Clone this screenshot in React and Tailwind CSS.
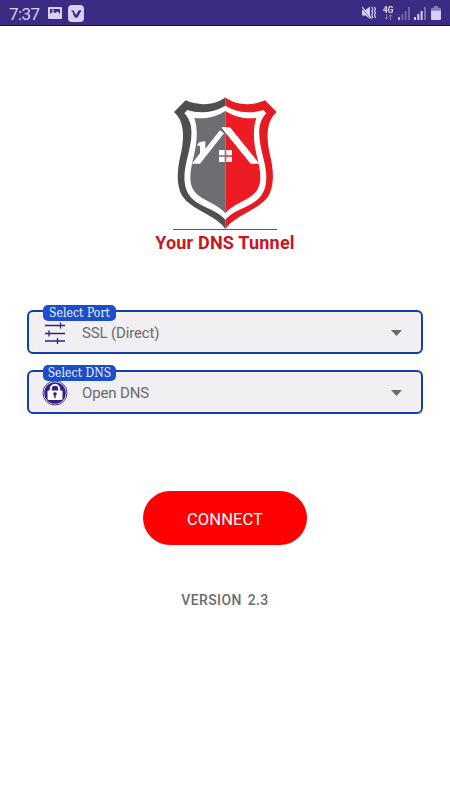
const serif = "font-['DejaVu_Serif_Condensed','DejaVu_Serif',serif]";

function StatusBar() {
  return (
    <header className="flex h-[26px] items-center border-b border-[#1d0a60] bg-[#3c2b82] pl-[9px] pr-[9px] text-[#d9d0f3]">
      <span className="w-[32px] whitespace-nowrap pt-[2px] text-[17px] leading-[24px] tracking-[-0.6px]">7:37</span>
      <svg className="ml-[7px] mt-[1px]" width="14" height="12" viewBox="0 0 14 12">
        <rect width="14" height="12" rx="1" fill="#d9d0f3" />
        <path d="M2 2h10v5L9.5 4.5 7 6 4.5 4.7 2 7Z" fill="#3c2b82" />
        <circle cx="5" cy="3.5" r="1" fill="#d9d0f3" />
        <path d="M2 8l3-2.5L7 7l3-2 2 3v1H2Z" fill="#d9d0f3" />
      </svg>
      <svg className="ml-[6px] mt-[1px]" width="16" height="17" viewBox="0 0 16 17">
        <rect width="16" height="17" rx="4" fill="#d9d0f3" />
        <path d="M3 5.5h2.2c.8 0 .9.5 1.3 1.7L8 10l2-3.6c.5-.9.8-1.1 1.6-1.1H13.5L10 11.8c-.7 1.3-3 1.3-3.8 0L4.5 7Z" fill="#3c2b82" />
      </svg>
      <div className="ml-auto mt-[1px] flex items-center">
        <svg width="14" height="16" viewBox="0 0 14 16" fill="none">
          <path d="M0 5h3.5L8 1.5v12.5L3.5 10.5H0Z" fill="#d9d0f3" />
          <path d="M0 3l9 11" stroke="#3c2b82" strokeWidth="1" />
          <path d="M0 1.8l9.5 11.7" stroke="#d9d0f3" strokeWidth="1.2" />
          <path d="M9.8 2l1 2-1 2 1 2-1 2 1 3M12.5 2l1 2-1 2 1 2-1 2 1 3" stroke="#d9d0f3" strokeWidth="1.2" />
        </svg>
        <div className="ml-[6px] flex w-[12px] flex-col items-center">
          <span className="text-[8.5px] font-bold leading-[8px]">4G</span>
          <svg width="9" height="6" viewBox="0 0 9 6" fill="none" stroke="#887abb">
            <path d="M2.5 0v5M.7 3.4l1.8 1.9 1.8-1.9M6.5 6V1M4.7 2.6L6.5.7l1.8 1.9" />
          </svg>
        </div>
        <svg className="ml-[4px]" width="12" height="13" viewBox="0 0 12 13">
          <path d="M0 10h2v3H0Z" fill="#c5bae5" />
          <path d="M3.3 7h2v6h-2ZM6.6 4h2v9h-2ZM10 0h2v13h-2Z" fill="#7061a9" />
        </svg>
        <svg className="ml-[4px]" width="12" height="13" viewBox="0 0 12 13">
          <path d="M0 10h2v3H0ZM3.3 7h2v6h-2ZM6.6 4h2v9h-2Z" fill="#d9d0f3" />
          <path d="M10 0h2v13h-2Z" fill="#7e6eb3" />
        </svg>
        <svg className="ml-[5px]" width="10" height="14" viewBox="0 0 10 14">
          <path d="M3 0h4v1.7h2Q10 1.7 10 3v2H0V3q0-1.3 1-1.3h2Z" fill="#8a7dbb" />
          <path d="M0 4.7h10V13q0 1-1 1H1q-1 0-1-1Z" fill="#d9d0f3" />
        </svg>
      </div>
    </header>
  );
}

function Shield() {
  return (
    <svg width="106" height="134" viewBox="66 18 318 402">
      <path d="M226 22C195 47 143 48 107 31L72 66C101 91 104 135 94 185C83 230 78 270 91 306C109 357 198 372 226 417Z" fill="#4d4f50" />
      <path d="M226 22C257 47 309 48 345 31L380 66C351 91 348 135 358 185C369 230 374 270 361 306C343 357 254 372 226 417Z" fill="#e51b23" />
      <path d="M226 47C190 68 150 72 112 60L103 70C133 100 127 145 112 204C91 285 109 320 150 343C180 359 207 368 226 389C245 368 272 359 302 343C343 320 361 285 340 204C325 145 319 100 349 70L340 60C302 72 262 68 226 47Z" fill="#fff" />
      <path d="M226 63C197 81 167 88 133 84C145 120 141 160 130 204C112 275 121 304 160 326C187 341 210 350 226 370Z" fill="#6d6e72" />
      <path d="M226 63C255 81 285 88 319 84C307 120 311 160 322 204C340 275 331 304 292 326C265 341 242 350 226 370Z" fill="#ed1c24" />
      <path d="M125 221L150 190V168L141 166Q145 156 154 155L166 154V176L210 121L222 130L150 221Z" fill="#fff" />
      <path d="M214 112H240L328 221H302L229 131Z" fill="#fff" />
      <path d="M207 180h17v16h-17ZM229 180h17v16h-17ZM207 200h17v16h-17ZM229 200h17v16h-17Z" fill="#fff" />
    </svg>
  );
}

function SlidersIcon() {
  return (
    <svg width="20" height="22" viewBox="0 0 20 22" fill="none" stroke="#35207e" strokeWidth="1.3">
      <path d="M0 3.5h20M0 11.5h20M0 19h20M15.5 .5v6M4 8.5v6M12.5 16v6" />
    </svg>
  );
}

function LockIcon() {
  return (
    <svg width="26" height="26" viewBox="0 0 26 26">
      <circle cx="13" cy="13" r="12" fill="#fff" stroke="#493394" strokeWidth="1" />
      <circle cx="13" cy="13" r="10.8" fill="#35207e" />
      <path d="M8.8 11V9a4.2 4.2 0 0 1 8.4 0v2" fill="none" stroke="#fff" strokeWidth="2" />
      <rect x="5.5" y="10.5" width="15" height="9.5" rx="1" fill="#fff" />
      <path d="M11.2 14a1.8 1.8 0 1 1 2.5 1.6V18h-1.4v-2.4a1.8 1.8 0 0 1-1.1-1.6Z" fill="#35207e" />
    </svg>
  );
}

function SelectField({ label, value, icon }) {
  return (
    <div className="relative flex h-[44px] w-[396px] items-center rounded-[6px] border-2 border-[#123fae] bg-[#f1eff1] pr-[19px] pt-[2px]">
      <span className={`absolute left-[14px] top-[-7px] flex h-[16px] w-[73px] items-center justify-center whitespace-nowrap rounded-[5px] bg-[#1c4dca] text-[12px] leading-[16px] tracking-[0.08px] text-[#f0f5ff] ${serif}`}>
        {label}
      </span>
      <div className="flex w-[53px] pr-[2px] justify-center">{icon}</div>
      <span className="text-[15px] leading-[20px] tracking-[-0.15px] text-[#6b6b6d]">{value}</span>
      <svg className="ml-auto" width="11" height="6" viewBox="0 0 11 6">
        <path d="M0 0h11L5.5 6Z" fill="#6c6b6d" />
      </svg>
    </div>
  );
}

export default function App() {
  return (
    <div className="min-h-[800px] w-[450px] bg-white font-[Roboto,sans-serif]">
      <StatusBar />
      <main className="flex flex-col items-center">
        <div className="mt-[70px] flex flex-col items-center">
          <Shield />
          <div className="mt-[-1px] h-px w-[104px] bg-[#555]" />
          <h1 className="mt-[1px] whitespace-nowrap text-[18px] font-bold leading-[24px] tracking-[0.2px] text-[#c9151f]">Your DNS Tunnel</h1>
        </div>
        <div className="mt-[55px] flex flex-col gap-[16px]">
          <SelectField label="Select Port" value="SSL (Direct)" icon={<SlidersIcon />} />
          <SelectField label="Select DNS" value="Open DNS" icon={<LockIcon />} />
        </div>
        <button className="mt-[77px] h-[54px] w-[164px] rounded-full bg-[#fe0000] pt-[3px] text-[16.5px] leading-[24px] tracking-[0.1px] text-white">CONNECT</button>
        <p className="mt-[45px] text-[14px] font-medium leading-[20px] tracking-[0.4px] [word-spacing:2px] text-[#6b6b6b]">VERSION 2.3</p>
      </main>
    </div>
  );
}
